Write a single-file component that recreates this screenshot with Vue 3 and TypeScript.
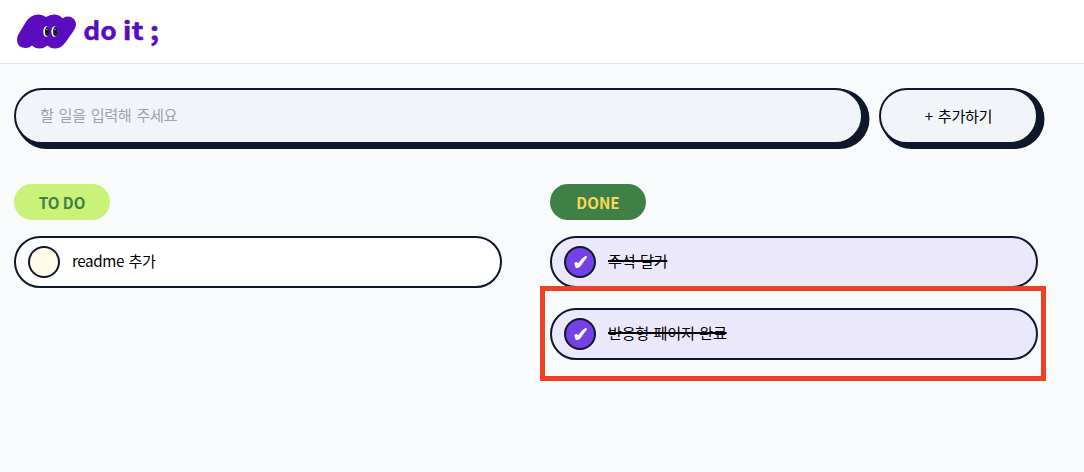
<script setup lang="ts">
import { ref } from 'vue'

interface Todo {
  id: number
  name: string
  selected?: boolean
}

const draft = ref('')
const todos = ref<Todo[]>([{ id: 1, name: 'readme 추가' }])
const dones = ref<Todo[]>([
  { id: 2, name: '주석 달기' },
  { id: 3, name: '반응형 페이지 완료', selected: true },
])

function addTodo() {
  const name = draft.value.trim()
  if (!name) return
  todos.value.push({ id: Date.now(), name })
  draft.value = ''
}
</script>

<template>
  <div class="page">
    <header class="header">
      <svg class="logo" width="164" height="48" viewBox="0 0 164 48" role="img" aria-label="do it ;">
        <path d="M18.300 26.500 L26.500 13 Q31 6.500 38.500 6.500 Q43 6.500 46 9 Q49.500 6.500 54 6.500 Q59.500 6.500 62.500 10.300 Q66 7.700 70 8.700 Q76 10.500 76 17 Q75.500 20 73.500 23 L65 35 Q61 40.500 54.500 40.500 Q50.500 40.500 47.500 37.500 Q44 40.500 39.500 40.500 Q35 40.500 32 37.500 Q29 40.200 25 40 Q17 39 17 32 Q17 29 18.300 26.500Z" fill="#5b0cbe" />
        <g fill="#fff">
          <ellipse cx="46.200" cy="23.500" rx="2.900" ry="5.300" />
          <ellipse cx="54.300" cy="23.500" rx="2.900" ry="5.300" />
        </g>
        <g fill="#151a2c">
          <ellipse cx="47.100" cy="23.500" rx="2.100" ry="4.600" />
          <ellipse cx="55.200" cy="23.500" rx="2.100" ry="4.600" />
        </g>
        <g fill="#fff">
          <circle cx="46.900" cy="21.300" r=".6" />
          <circle cx="55" cy="21.300" r=".6" />
        </g>
        <g class="wordmark">
          <text x="83.200" y="32.300" textLength="33.500" lengthAdjust="spacingAndGlyphs">do</text>
          <text x="122.700" y="32.300" textLength="21" lengthAdjust="spacingAndGlyphs">it</text>
          <text x="149.700" y="31.500" textLength="9.500" lengthAdjust="spacingAndGlyphs">;</text>
        </g>
      </svg>
    </header>

    <main class="main">
      <form class="composer" @submit.prevent="addTodo">
        <input v-model="draft" class="field" type="text" placeholder="할 일을 입력해 주세요" />
        <button class="add" type="submit">+ 추가하기</button>
      </form>

      <div class="columns">
        <section class="column">
          <h2 class="badge badge-todo">TO DO</h2>
          <ul class="list">
            <li v-for="item in todos" :key="item.id" class="item">
              <span class="check"></span>
              <span class="name">{{ item.name }}</span>
            </li>
          </ul>
        </section>
        <section class="column">
          <h2 class="badge badge-done">DONE</h2>
          <ul class="list">
            <li v-for="item in dones" :key="item.id" class="item done" :class="{ selected: item.selected }">
              <span class="check">
                <svg width="15" height="15" viewBox="0 0 16 16" aria-hidden="true">
                  <path d="M1.300 8.800 Q2.500 6.900 4.400 7.600 L5.600 8.800 Q8.500 3.900 12.800 1.200 Q14.900 .8 14.900 2.600 Q11.100 7 7.900 12.300 Q4.900 15 2.700 13.200 Q2.100 10.700 1.300 8.800Z" fill="#fff" />
                </svg>
              </span>
              <span class="name">{{ item.name }}</span>
            </li>
          </ul>
        </section>
      </div>
    </main>
  </div>
</template>

<style>
body {
  margin: 0;
  background: #f9fafc;
}
</style>

<style scoped>
.page {
  min-height: 472px;
  background: #f9fafc;
  color: #000;
  font-family: "Noto Sans CJK KR", sans-serif;
  font-size: 15.2px;
}

.header {
  box-sizing: border-box;
  height: 64px;
  padding-top: 8px;
  border-bottom: 1px solid #e2e5ea;
  background: #fff;
}

.logo {
  display: block;
}

.wordmark {
  fill: #5b0cbe;
  stroke: #5b0cbe;
  stroke-width: 0.4px;
  stroke-linejoin: round;
  font: 700 25.5px "Noto Sans CJK KR", sans-serif;
}

.main {
  width: 1024px;
  padding: 24px 0 0 14px;
}

.composer {
  display: flex;
  gap: 16px;
}

.field,
.add {
  box-sizing: border-box;
  height: 56px;
  margin: 0;
  border: 2px solid #0f172a;
  border-radius: 28px;
  background: #f1f5f9;
  box-shadow:
    2.2px 1.5px 0 1px #0f172a,
    4.5px 3px 0 2px #0f172a;
  font: inherit;
  letter-spacing: -0.4px;
  word-spacing: 2px;
}

.field {
  width: 849px;
  padding: 0 24px 5px;
  outline: none;
}

.field::placeholder {
  color: #9ca3af;
  opacity: 1;
}

.add {
  width: 159px;
  padding: 0 0 2px;
  color: #000;
}

.columns {
  display: grid;
  grid-template-columns: 488px 488px;
  gap: 48px;
  margin-top: 40px;
}

.badge {
  box-sizing: border-box;
  width: 96px;
  height: 36px;
  margin: 0 0 16px;
  border-radius: 18px;
  font-size: 15.2px;
  font-weight: 700;
  line-height: 37px;
  text-align: center;
}

.badge-todo {
  background: #caf279;
  color: #3f8046;
}

.badge-done {
  background: #3f8046;
  color: #fcd65c;
}

.list {
  display: grid;
  gap: 20px;
  margin: 0;
  padding: 0;
  list-style: none;
}

.item {
  position: relative;
  display: flex;
  align-items: center;
  gap: 12px;
  box-sizing: border-box;
  height: 52px;
  padding: 0 12px;
  border: 2px solid #0f172a;
  border-radius: 26px;
  background: #fff;
}

.item.done {
  background: #ece8fc;
}

.selected::after {
  position: absolute;
  inset: -24px -10px -23px -12px;
  border: 5px solid #ed4024;
  content: "";
}

.check {
  display: grid;
  place-items: center;
  box-sizing: border-box;
  width: 32px;
  height: 32px;
  border: 2px solid #0f172a;
  border-radius: 50%;
  background: #fefce8;
}

.done .check {
  background: #7540e4;
}

.name {
  height: 24px;
  margin-top: -5px;
  line-height: 24px;
  letter-spacing: -0.4px;
  word-spacing: 1.5px;
}

.done .name {
  letter-spacing: -0.3px;
  text-decoration: line-through 1.5px;
}
</style>
